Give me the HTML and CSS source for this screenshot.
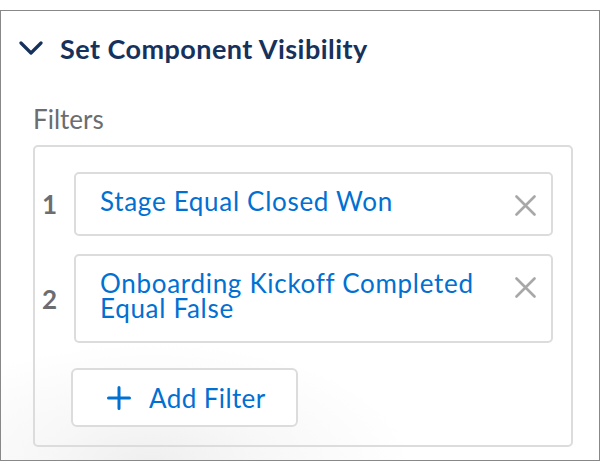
FILE: index.html
```html
<!DOCTYPE html>
<html>
<head>
<meta charset="utf-8">
<link rel="stylesheet" href="styles.css">
</head>
<body>
<div class="panel">
  <div class="header">
    <svg class="chevron" width="24" height="14" viewBox="0 0 24 14"><path d="M2 2 L12 12 L22 2" fill="none" stroke="#16325c" stroke-width="3.2" stroke-linecap="round" stroke-linejoin="round"/></svg>
    <h2 class="title">Set Component Visibility</h2>
  </div>
  <div class="label">Filters</div>
  <div class="filters">
    <div class="row">
      <span class="num">1</span>
      <div class="pill">
        <span class="pill-text">Stage Equal Closed Won</span>
        <svg class="close" width="21" height="21" viewBox="0 0 21 21"><path d="M1.5 1.5 L19.5 19.5 M19.5 1.5 L1.5 19.5" stroke="#a8a8a8" stroke-width="2.6" stroke-linecap="round"/></svg>
      </div>
    </div>
    <div class="row">
      <span class="num">2</span>
      <div class="pill">
        <span class="pill-text">Onboarding Kickoff Completed Equal False</span>
        <svg class="close" width="21" height="21" viewBox="0 0 21 21"><path d="M1.5 1.5 L19.5 19.5 M19.5 1.5 L1.5 19.5" stroke="#a8a8a8" stroke-width="2.6" stroke-linecap="round"/></svg>
      </div>
    </div>
    <button class="add">
      <svg class="plus" width="24" height="24" viewBox="0 0 24 24"><path d="M12 1.5 V22.5 M1.5 12 H22.5" stroke="#0070d2" stroke-width="3" stroke-linecap="round"/></svg>
      <span>Add Filter</span>
    </button>
  </div>
</div>
</body>
</html>
```

FILE: styles.css
```css
* { box-sizing: border-box; }
html, body { margin: 0; padding: 0; background: #fff; }
body { font-family: Lato, "Open Sans", sans-serif; }

.panel {
  margin-top: 10px;
  width: 600px;
  height: 451px;
  border: 1px solid #888;
  background: radial-gradient(ellipse 260px 120px at 150px 451px, #efefef 0%, #f7f7f7 40%, #fff 100%);
}

.header {
  display: flex;
  align-items: center;
  height: 74px;
  padding-left: 18px;
}
.chevron { flex: none; margin-right: 17px; }
.title {
  margin: 0;
  font-size: 27px;
  letter-spacing: 0.45px;
  font-weight: 700;
  color: #16325c;
}

.label {
  padding-left: 32px;
  margin-top: 20px;
  font-size: 26px;
  line-height: 28px;
  color: #6b6d70;
}

.filters {
  margin: 12px 26px 0 32px;
  height: 302px;
  border: 2px solid #dcdcdc;
  border-radius: 5px;
  padding: 25px 18px 0 0;
}

.row {
  display: grid;
  grid-template-columns: 39px 1fr;
  align-items: center;
  margin-bottom: 18px;
}
.num {
  padding-left: 7px;
  font-size: 26px;
  font-weight: 700;
  color: #6b6d70;
}
.pill {
  display: flex;
  align-items: flex-start;
  border: 2px solid #dcdcdc;
  border-radius: 5px;
  padding: 15px 15px 20px 24px;
}
.pill-text {
  flex: 1;
  font-size: 26px;
  letter-spacing: 0.7px;
  line-height: 25px;
  color: #0070d2;
  padding-right: 30px;
}
.close { flex: none; margin-top: 6px; margin-bottom: -2px; }

.add {
  margin-left: 36px;
  margin-top: 25px;
  display: flex;
  align-items: center;
  gap: 18px;
  height: 59px;
  padding: 0 30px 0 34px;
  background: #fff;
  border: 2px solid #dcdcdc;
  border-radius: 6px;
  font-family: inherit;
  font-size: 26px;
  letter-spacing: 0.4px;
  color: #0070d2;
}
```
